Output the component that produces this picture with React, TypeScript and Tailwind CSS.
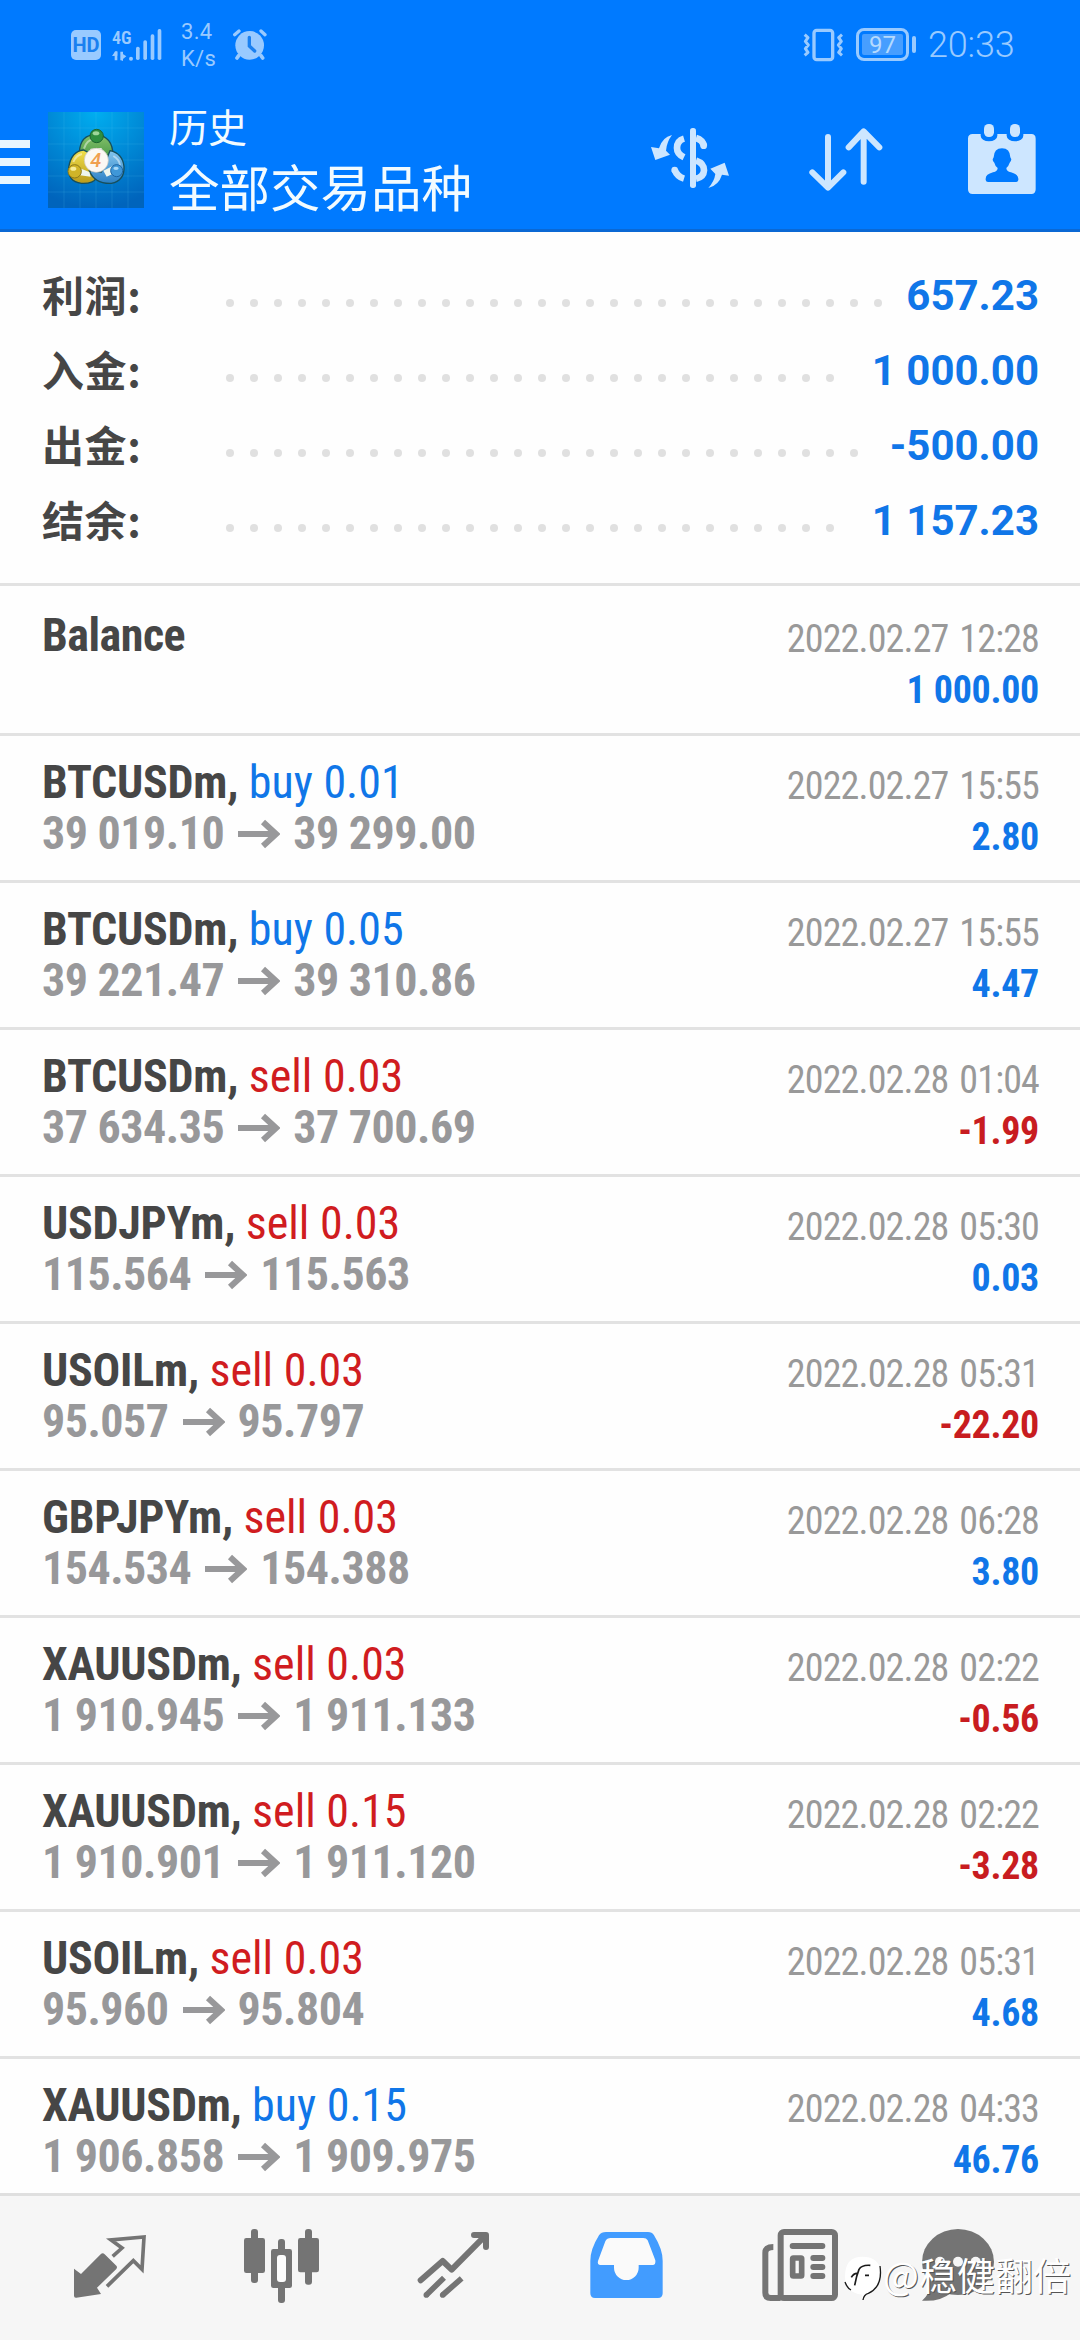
import type { ReactNode } from "react";

const summary = [
  { label: "利润:", value: "657.23" },
  { label: "入金:", value: "1 000.00" },
  { label: "出金:", value: "-500.00" },
  { label: "结余:", value: "1 157.23" },
];

type Deal = {
  symbol: string;
  side?: "buy" | "sell";
  volume?: string;
  open?: string;
  close?: string;
  time: string;
  profit: string;
};

const deals: Deal[] = [
  { symbol: "Balance", time: "2022.02.27 12:28", profit: "1 000.00" },
  { symbol: "BTCUSDm", side: "buy", volume: "0.01", open: "39 019.10", close: "39 299.00", time: "2022.02.27 15:55", profit: "2.80" },
  { symbol: "BTCUSDm", side: "buy", volume: "0.05", open: "39 221.47", close: "39 310.86", time: "2022.02.27 15:55", profit: "4.47" },
  { symbol: "BTCUSDm", side: "sell", volume: "0.03", open: "37 634.35", close: "37 700.69", time: "2022.02.28 01:04", profit: "-1.99" },
  { symbol: "USDJPYm", side: "sell", volume: "0.03", open: "115.564", close: "115.563", time: "2022.02.28 05:30", profit: "0.03" },
  { symbol: "USOILm", side: "sell", volume: "0.03", open: "95.057", close: "95.797", time: "2022.02.28 05:31", profit: "-22.20" },
  { symbol: "GBPJPYm", side: "sell", volume: "0.03", open: "154.534", close: "154.388", time: "2022.02.28 06:28", profit: "3.80" },
  { symbol: "XAUUSDm", side: "sell", volume: "0.03", open: "1 910.945", close: "1 911.133", time: "2022.02.28 02:22", profit: "-0.56" },
  { symbol: "XAUUSDm", side: "sell", volume: "0.15", open: "1 910.901", close: "1 911.120", time: "2022.02.28 02:22", profit: "-3.28" },
  { symbol: "USOILm", side: "sell", volume: "0.03", open: "95.960", close: "95.804", time: "2022.02.28 05:31", profit: "4.68" },
  { symbol: "XAUUSDm", side: "buy", volume: "0.15", open: "1 906.858", close: "1 909.975", time: "2022.02.28 04:33", profit: "46.76" },
];

export default function App() {
  return (
    <div className="relative flex h-[2340px] w-[1080px] flex-col overflow-hidden bg-[#fefefe] font-['Roboto','Noto_Sans_CJK_SC',sans-serif]">
      <header className="h-[232px] shrink-0 border-b-[3px] border-[#0a68d4] bg-[#007aff]">
        <StatusBar />
        <AppBar />
      </header>

      <section className="shrink-0 border-b-[3px] border-[#e2e2e2] pt-[26px] pr-[41px] pb-[25px] pl-[42px]">
        {summary.map((item) => (
          <SummaryRow key={item.label} label={item.label} value={item.value} />
        ))}
      </section>

      <main className="min-h-0 flex-1 overflow-hidden pt-[3px]">
        {deals.map((deal, index) => (
          <DealRow key={index} deal={deal} />
        ))}
      </main>

      <BottomNav />
      <Watermark />
    </div>
  );
}

function StatusBar() {
  return (
    <div className="flex h-[88px] items-center justify-between pt-px pr-[64px] pl-[71px] text-[#99caff]">
      <div className="flex items-center">
        <div className="flex h-[30px] w-[30px] items-center justify-center rounded-[5px] bg-[#99caff] text-[20px] font-bold text-[#1a80f0]">
          HD
        </div>
        <div className="ml-[11px] flex h-[33px] items-end">
          <div className="flex w-[22px] flex-col">
            <div className="text-[18px] leading-[18px] font-semibold font-['Roboto_Condensed',sans-serif]">4G</div>
            <svg className="h-[14px] w-[22px]" viewBox="0 0 66 42" fill="currentColor">
              <path d="M12 14v26M29 14v26" stroke="currentColor" strokeWidth="8" />
              <path d="M0 27 10 13h6v13zM33 41h-4V19l14 9-10 8z" />
              <circle cx="57" cy="35" r="6" />
            </svg>
          </div>
          <svg className="h-[33px] w-[28px]" viewBox="0 0 84 99" fill="currentColor">
            <rect x="6" y="56" width="11" height="40" rx="5" />
            <rect x="28" y="37" width="11" height="59" rx="5" />
            <rect x="50" y="19" width="11" height="77" rx="5" />
            <rect x="71" y="3" width="11" height="93" rx="5" />
          </svg>
        </div>
        <div className="ml-[19px] w-[52px] text-[22px] leading-[27px] tracking-[0.3px]">
          <div>3.4</div>
          <div>K/s</div>
        </div>
        <svg className="h-[31px] w-[34px]" viewBox="0 0 102 93">
          <circle cx="50" cy="49" r="43" fill="currentColor" />
          <path d="M17 80 12 87M84 80l5 7" stroke="currentColor" strokeWidth="11" strokeLinecap="round" />
          <path d="M5 17 18 6M84 6l12 11" stroke="currentColor" strokeWidth="10" strokeLinecap="round" />
          <path d="M49 25v26l16 15" fill="none" stroke="#1a80f0" strokeWidth="10" strokeLinecap="round" />
        </svg>
      </div>
      <div className="flex items-center">
        <svg className="h-[34px] w-[42px]" viewBox="0 0 126 102" fill="none" stroke="currentColor">
          <rect x="33" y="7" width="56" height="88" rx="8" strokeWidth="10" />
          <path d="M5 20l10 9-8 11 9 11-9 11 8 11-10 9M117 20l-10 9 8 11-9 11 9 11-8 11 10 9" strokeWidth="9" strokeLinejoin="round" />
        </svg>
        <div className="ml-[11px] flex h-[33px] w-[53px] items-center justify-center rounded-[8px] border-[3px] border-[#99caff] p-[3px]">
          <div className="flex h-full w-full items-center justify-center rounded-[2px] bg-[#479eff] text-[24px] leading-none text-[#b4daff]">97</div>
        </div>
        <div className="ml-[3px] h-[17px] w-[4px] rounded-full bg-[#99caff]" />
        <div className="ml-[12px] w-[88px] text-[36px] leading-none font-light tracking-[-0.2px]">20:33</div>
      </div>
    </div>
  );
}

function AppBar() {
  return (
    <div className="flex h-[141px] items-start">
      <div className="flex w-[30px] flex-col gap-[10px] pt-[52px]">
        <div className="h-2 bg-[#e8f6ff]" />
        <div className="h-2 bg-[#e8f6ff]" />
        <div className="h-2 bg-[#e8f6ff]" />
      </div>
      <Logo />
      <div className="ml-[25px] pt-[12px] text-[#f2fbff] font-['Noto_Sans_CJK_SC',sans-serif]">
        <div className="text-[39px] leading-[50px]">历史</div>
        <div className="text-[50.5px] leading-[71px]">全部交易品种</div>
      </div>
      <div className="ml-auto flex pt-[30px] text-[#cde6ff]">
        <ActionIcon>
          <rect x="126" y="30" width="18" height="180" rx="8" fill="currentColor" />
          <path d="M108 62Q87 68 87 90Q87 108 108 118M80 156Q88 176 108 182M144 60Q164 66 168 84M144 128Q168 136 168 157Q167 177 144 182" strokeWidth="20" />
          <circle cx="80" cy="156" r="10" fill="currentColor" />
          <circle cx="167" cy="83" r="10" fill="currentColor" />
          <path d="M72 51Q42 58 33 91L9 87L22 126L66 110L54 98Q56 72 72 51Z" fill="currentColor" />
          <path d="M181 210Q199 190 202 168L187 152L230 134L243 173L222 170Q212 202 181 210Z" fill="currentColor" />
        </ActionIcon>
        <ActionIcon>
          <path d="M72 57V208M25 163L72 209L118 163M179 191V42M134 88L179 40L226 88" strokeWidth="18" strokeLinecap="round" strokeLinejoin="round" />
        </ActionIcon>
        <ActionIcon>
          <path d="M38 48H62V53A25 17 0 0 0 112 53V48H140V53A25 17 0 0 0 190 53V48H214Q227 48 227 62V214Q227 228 214 228H38Q24 228 24 214V62Q24 48 38 48Z" fill="currentColor" />
          <rect x="72" y="18" width="30" height="39" rx="14" fill="currentColor" />
          <rect x="150" y="18" width="30" height="39" rx="14" fill="currentColor" />
          <path d="M126 91Q150 91 151 118L154 124Q153 132 149 134Q145 146 139 150Q139 160 153 163Q175 169 175 182V186Q174 192 168 192H84Q78 192 77 186V182Q77 169 99 163Q113 160 113 150Q106 146 103 134Q98 132 98 124L101 118Q102 91 126 91Z" fill="#007aff" />
        </ActionIcon>
      </div>
    </div>
  );
}

function ActionIcon({ children }: { children: ReactNode }) {
  return (
    <div className="flex w-[156px] justify-center">
      <svg className="h-[84px] w-[84px]" viewBox="0 0 252 252" fill="none" stroke="currentColor" strokeWidth="0">
        {children}
      </svg>
    </div>
  );
}

function Logo() {
  return (
    <svg className="mt-6 ml-[18px] h-24 w-24" viewBox="0 0 288 288">
      <defs>
        <radialGradient id="sky" cx="0.5" cy="0" r="1">
          <stop offset="0" stopColor="#00aef0" />
          <stop offset="1" stopColor="#0064bc" />
        </radialGradient>
        <linearGradient id="green" x1="0" y1="0" x2="0" y2="1">
          <stop offset="0" stopColor="#86c26a" />
          <stop offset="1" stopColor="#2c8538" />
        </linearGradient>
        <linearGradient id="yellow" x1="0" y1="0" x2="0" y2="1">
          <stop offset="0" stopColor="#f2e04c" />
          <stop offset="1" stopColor="#b99b1c" />
        </linearGradient>
        <linearGradient id="blue" x1="0" y1="0" x2="0" y2="1">
          <stop offset="0" stopColor="#84c6ee" />
          <stop offset="1" stopColor="#2b7fc4" />
        </linearGradient>
      </defs>
      <rect width="288" height="288" fill="url(#sky)" />
      <path d="M48 0V288M96 0V288M144 0V288M192 0V288M240 0V288M0 48H288M0 96H288M0 144H288M0 192H288M0 240H288" stroke="#5cc4f4" strokeOpacity="0.16" strokeWidth="3" />
      <g stroke="#174f5c" strokeWidth="4">
        <path d="M94 122Q96 68 144 68Q194 72 195 130Q193 158 176 172L108 150Q94 140 94 122Z" fill="url(#green)" />
        <path d="M106 114Q70 118 62 166Q58 208 100 214Q134 216 144 200L118 120Z" fill="url(#yellow)" />
        <path d="M186 116Q224 124 228 164Q230 206 190 214Q140 216 124 176L160 180Z" fill="url(#blue)" />
      </g>
      <path d="M108 110Q116 84 136 82M76 150Q84 130 102 126M196 132Q214 142 216 160" fill="none" stroke="#fff" strokeOpacity="0.45" strokeWidth="6" />
      <path d="M128 110L160 108L176 132L120 130ZM94 168L124 180L128 194L96 190ZM166 176L194 162L198 184L176 194Z" fill="#eef6ee" />
      <circle cx="146" cy="72" r="20" fill="#2f8f3f" stroke="#1c6430" strokeWidth="3" />
      <circle cx="80" cy="178" r="20" fill="#d0b428" stroke="#8e7a18" strokeWidth="3" />
      <circle cx="206" cy="176" r="18" fill="#3f97d8" stroke="#1c64a4" strokeWidth="3" />
      <ellipse cx="144" cy="64" rx="10" ry="6" fill="#9ed69a" />
      <ellipse cx="76" cy="170" rx="9" ry="6" fill="#f6ec9a" />
      <ellipse cx="204" cy="169" rx="8" ry="5" fill="#a8d8f6" />
      <circle cx="145" cy="145" r="36" fill="#fbf8f4" stroke="#c9c4bc" strokeWidth="2" />
      <text x="143" y="166" textAnchor="middle" fontSize="60" fontStyle="italic" fontFamily="Roboto" fontWeight="500" fill="#f0a050">4</text>
    </svg>
  );
}

function SummaryRow({ label, value }: { label: string; value: string }) {
  return (
    <div className="flex h-[75px] items-center text-[42px] leading-[75px] font-bold">
      <div className="w-[176px] shrink-0 pb-[5px] tracking-[0.6px] text-[#464646] font-['Noto_Sans_CJK_SC',sans-serif]">{label}</div>
      <div className="mt-[15px] flex h-6 flex-1 flex-wrap overflow-hidden">
        {Array.from({ length: 28 }, (_, i) => (
          <span key={i} className="flex h-6 w-6 items-center justify-center">
            <span className="h-2 w-2 rounded-full bg-[#e0e0e0]" />
          </span>
        ))}
      </div>
      <div className="pl-2 text-[#1076e8]">{value}</div>
    </div>
  );
}

function DealRow({ deal }: { deal: Deal }) {
  const sideColor = deal.side === "sell" ? "text-[#d01c20]" : "text-[#1076e8]";
  const profitColor = deal.profit.startsWith("-") ? "text-[#c81c20]" : "text-[#1076e8]";

  return (
    <div className="flex h-[147px] justify-between border-b-[3px] border-[#e2e2e2] pr-[41px] pl-[42px] leading-[51px] whitespace-nowrap font-['Roboto_Condensed',sans-serif]">
      <div className="pt-[21px] text-[46px]">
        <div>
          <span className={`font-bold text-[#464646] ${deal.side ? "tracking-[-0.25px]" : "tracking-[-0.5px]"}`}>
            {deal.symbol}
            {deal.side && ","}
          </span>
          {deal.side && (
            <span className={sideColor}>
              {" "}
              {deal.side} {deal.volume}
            </span>
          )}
        </div>
        {deal.open && (
          <div className="flex items-center font-bold tracking-[-0.5px] text-[#98989a]">
            {deal.open}
            <svg className="mr-[13px] ml-[14px] h-[30px] w-[42px]" viewBox="0 0 42 30" fill="none" stroke="currentColor" strokeWidth="6">
              <path d="M0 15H38M25 3L38 15L25 27" />
            </svg>
            {deal.close}
          </div>
        )}
      </div>
      <div className="pt-[25px] text-right text-[38px]">
        <div className="tracking-[-0.85px] text-[#999] [word-spacing:3px]">{deal.time}</div>
        <div className={`font-bold tracking-[-0.3px] ${profitColor}`}>{deal.profit}</div>
      </div>
    </div>
  );
}

function BottomNav() {
  return (
    <nav className="flex h-[147px] shrink-0 items-center border-t-[3px] border-[#dfdfdf] bg-[#f6f6f6] px-6 text-[#747474]">
      <NavIcon>
        <path d="M18 128L39 144L98 85Q104 79 110 85L145 119Q149 124 145 129L87 185L99 204L25 215Q18 216 18 209Z" fill="currentColor" />
        <path d="M134 91L162 66L129 42L228 33L222 130L196 104L117 181" strokeWidth="11" />
      </NavIcon>
      <NavIcon>
        <g fill="currentColor">
          <rect x="33" y="9" width="21" height="162" rx="9" />
          <rect x="12" y="36" width="63" height="105" rx="7" />
          <rect x="195" y="9" width="21" height="167" rx="9" />
          <rect x="174" y="36" width="63" height="103" rx="7" />
          <rect x="114" y="39" width="21" height="192" rx="9" />
          <rect x="93" y="69" width="63" height="117" rx="7" />
        </g>
        <rect x="111" y="87" width="27" height="81" rx="9" fill="#fcfcfc" />
      </NavIcon>
      <NavIcon>
        <path d="M26 163L92 105L119 131L220 29M186 27H222V63" strokeWidth="18" strokeLinecap="round" strokeLinejoin="round" />
        <path d="M204 27L222 27L222 46Z" fill="currentColor" />
        <path d="M43 207L96 155M92 207L149 157" strokeWidth="17" />
        <circle cx="43" cy="207" r="8.5" fill="currentColor" />
        <circle cx="92" cy="207" r="8.5" fill="currentColor" />
      </NavIcon>
      <NavIcon>
        <path d="M66 18H192Q204 18 210 28Q236 70 236 104V202Q236 216 222 216H33Q19 216 19 202V104Q19 70 45 28Q52 18 66 18Z" fill="#429cff" />
        <path d="M80 36H178Q187 36 191 43L214 103Q216 117 206 117H164V125A37 37 0 0 1 90 125V117H50Q39 117 42 105L64 46Q69 36 80 36Z" fill="#fafafa" />
      </NavIcon>
      <NavIcon>
        <rect x="74" y="18" width="163" height="198" rx="10" strokeWidth="18" />
        <path d="M52 63Q28 63 28 80V200Q28 216 44 216H74" strokeWidth="18" />
        <path d="M110 60H199M172 96H199M172 123H199M172 150H199" strokeWidth="18" strokeLinecap="round" />
        <rect x="110" y="96" width="27" height="54" rx="2" strokeWidth="17" />
      </NavIcon>
      <NavIcon>
        <g fill="currentColor">
          <ellipse cx="90" cy="108" rx="108" ry="99" />
          <path d="M-18 224Q12 200 2 165L70 200Q36 228 -18 224Z" />
          <g fill="#f6f6f6">
            <circle cx="36" cy="107" r="15" />
            <circle cx="90" cy="107" r="15" />
            <circle cx="143" cy="107" r="15" />
          </g>
        </g>
      </NavIcon>
    </nav>
  );
}

function NavIcon({ children }: { children: ReactNode }) {
  return (
    <div className="flex w-[172px] justify-center">
      <svg className="h-[84px] w-[84px] overflow-visible" viewBox="0 0 252 252" fill="none" stroke="currentColor" strokeWidth="0">
        {children}
      </svg>
    </div>
  );
}

function Watermark() {
  return (
    <div className="absolute right-[9px] bottom-[38px] flex items-center">
      <svg className="mt-2 h-[48px] w-[40px]" viewBox="0 0 120 144">
        <path d="M58 8Q112 8 113 60Q113 108 68 124L58 137L58 122Q22 118 8 92Q-4 8 58 8Z" fill="#fff" />
        <path d="M111 36Q120 98 76 118Q62 122 60 138M6 84Q12 102 24 108" fill="none" stroke="#1a1a1a" strokeWidth="4" />
        <path d="M35 94Q40 66 48 46Q56 32 82 34M25 70Q32 58 42 58M66 64h12" fill="none" stroke="#1a1a1a" strokeWidth="5" />
      </svg>
      <div className="text-[38px] leading-[48px] whitespace-nowrap text-white [text-shadow:1px_1px_0_#555] font-['Noto_Sans_CJK_SC',sans-serif]">@稳健翻倍</div>
    </div>
  );
}
